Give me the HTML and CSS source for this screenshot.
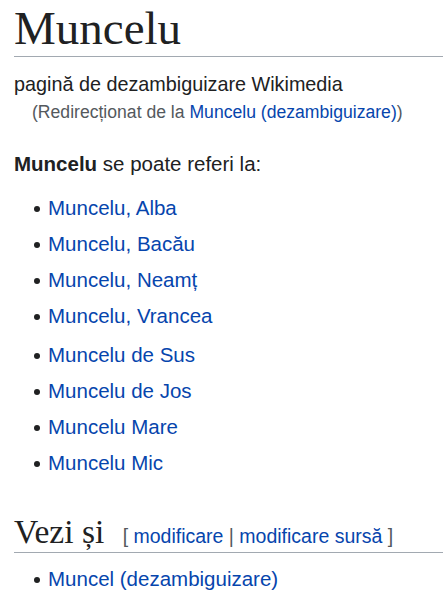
FILE: index.html
```html
<!DOCTYPE html>
<html>
<head>
  <title>Muncelu</title>
  <meta name="viewport" content="width=device-width, initial-scale=1">
  <link rel="stylesheet" href="styles.css">
</head>
<body>
  <h1 class="page-title">Muncelu</h1>
  <div class="content">
    <div class="tagline">pagină de dezambiguizare Wikimedia</div>
    <div class="redirect">(Redirecționat de la <a href="#">Muncelu (dezambiguizare)</a>)</div>

    <p class="intro"><b>Muncelu</b> se poate referi la:</p>

    <ul class="links">
      <li><a href="#">Muncelu, Alba</a></li>
      <li><a href="#">Muncelu, Bacău</a></li>
      <li><a href="#">Muncelu, Neamț</a></li>
      <li><a href="#">Muncelu, Vrancea</a></li>
    </ul>
    <ul class="links">
      <li><a href="#">Muncelu de Sus</a></li>
      <li><a href="#">Muncelu de Jos</a></li>
      <li><a href="#">Muncelu Mare</a></li>
      <li><a href="#">Muncelu Mic</a></li>
    </ul>

    <h2 class="section-title">Vezi și <span class="edit">[ <a href="#">modificare</a> | <a href="#">modificare sursă</a> ]</span></h2>
    <ul class="links">
      <li><a href="#">Muncel (dezambiguizare)</a></li>
    </ul>
  </div>
</body>
</html>
```

FILE: styles.css
```css
body {
  margin: 0;
  padding: 0 0 0 14px;
  font-family: "Liberation Sans", Arial, sans-serif;
  font-size: 20.5px;
  color: #202122;
  background: white;
}
a {
  color: #0645ad;
  text-decoration: none;
}
.page-title {
  font-family: "Liberation Serif", "Times New Roman", serif;
  font-weight: normal;
  font-size: 47px;
  line-height: 56px;
  margin: 0;
  border-bottom: 1px solid #a2a9b1;
}
.tagline {
  font-size: 19.8px;
  margin-top: 15px;
  line-height: 24px;
}
.redirect {
  font-size: 17.6px;
  color: #54595d;
  margin-left: 18px;
  margin-top: 3px;
  line-height: 26px;
}
.intro {
  margin: 25px 0 0;
  line-height: 28px;
}
.links {
  margin: 16px 0 0;
  padding-left: 34px;
  list-style: none;
}
.links li {
  line-height: 28px;
  margin-bottom: 8px;
}
.links li::before {
  content: "";
  display: inline-block;
  width: 6px;
  height: 6px;
  border-radius: 50%;
  background: #202122;
  vertical-align: middle;
  margin: 0 8px 2px -14px;
}
.links + .links {
  margin-top: 11px;
}
.section-title {
  font-family: "Liberation Serif", "Times New Roman", serif;
  font-weight: normal;
  font-size: 33.5px;
  line-height: 31px;
  margin: 39px 0 0;
  padding-bottom: 0;
  border-bottom: 1px solid #a2a9b1;
}
.section-title + .links {
  margin-top: 12px;
}
.edit {
  font-family: "Liberation Sans", Arial, sans-serif;
  font-size: 19.5px;
  color: #54595d;
  margin-left: 10px;
}
```
